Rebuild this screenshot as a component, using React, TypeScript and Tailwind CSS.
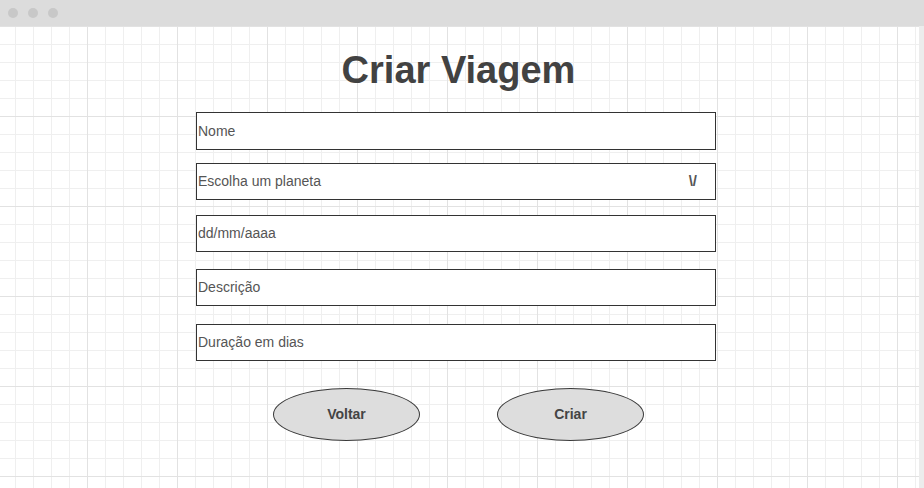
export default function App() {
  const fields = [
    { label: 'Nome', cls: 'mt-0 h-[38px]' },
    { label: 'Escolha um planeta', cls: 'mt-[13px] h-[37px]', select: true },
    { label: 'dd/mm/aaaa', cls: 'mt-[15px] h-[37px]' },
    { label: 'Descrição', cls: 'mt-[17px] h-[37px]' },
    { label: 'Duração em dias', cls: 'mt-[18px] h-[37px]' },
  ];

  return (
    <div className="w-[924px] h-[488px] overflow-hidden flex flex-col bg-white font-['Liberation_Sans',Arial,sans-serif]">
      {/* barra da janela */}
      <div className="h-[26px] shrink-0 bg-[#dcdcdc] flex items-center gap-[10px] pl-[8px]">
        <span className="w-[10px] h-[10px] rounded-full bg-[#c8c8c8]" />
        <span className="w-[10px] h-[10px] rounded-full bg-[#c8c8c8]" />
        <span className="w-[10px] h-[10px] rounded-full bg-[#c8c8c8]" />
      </div>

      {/* área com grade */}
      <div className="flex-1 flex flex-col border-r-[5px] border-[#ececec] bg-white bg-[image:linear-gradient(to_right,#e2e2e2_1px,transparent_1px),linear-gradient(to_bottom,#e2e2e2_1px,transparent_1px),linear-gradient(to_right,#efefef_1px,transparent_1px),linear-gradient(to_bottom,#efefef_1px,transparent_1px)] bg-[size:90px_90px,90px_90px,18px_18px,18px_18px] bg-[position:87px_0,0_90px,15px_0,0_18px]">
        <h1 className="mt-[25px] h-[38px] leading-[38px] text-center pr-[2px] text-[38px] font-bold text-[#424242]">
          Criar Viagem
        </h1>

        <div className="ml-[196px] w-[520px] mt-[23px] flex flex-col">
          {fields.map((f) => (
            <div
              key={f.label}
              className={`${f.cls} bg-white border-[1.5px] border-[#333333] flex items-center justify-between pl-[1px] pr-[18px] text-[14px] text-[#555555]`}
            >
              <span>{f.label}</span>
              {f.select && <span className="font-bold text-[#555555] text-[15px]">\/</span>}
            </div>
          ))}

          <div className="mt-[27px] flex gap-[77px] pl-[77px]">
            <button className="w-[147px] h-[53px] rounded-[50%] bg-[#dddddd] border border-[#3a3a3a] text-[14px] font-bold text-[#444444]">
              Voltar
            </button>
            <button className="w-[147px] h-[53px] rounded-[50%] bg-[#dddddd] border border-[#3a3a3a] text-[14px] font-bold text-[#444444]">
              Criar
            </button>
          </div>
        </div>
      </div>
    </div>
  );
}
